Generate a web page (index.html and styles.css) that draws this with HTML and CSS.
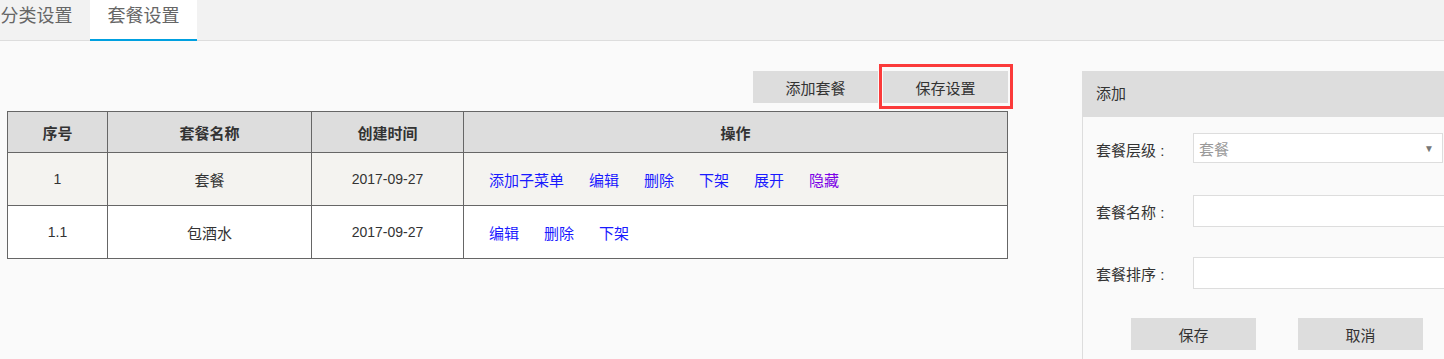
FILE: index.html
```html
<!DOCTYPE html>
<html lang="zh-CN">
<head>
<meta charset="utf-8">
<title>套餐设置</title>
<link rel="stylesheet" href="styles.css">
</head>
<body>
<div class="tabs">
  <div class="tab">分类设置</div>
  <div class="tab active">套餐设置</div>
</div>
<div class="main">
  <section class="left">
    <div class="toolbar">
      <button class="btn">添加套餐</button>
      <button class="btn highlighted">保存设置</button>
    </div>
    <table class="grid">
      <colgroup>
        <col class="c1"><col class="c2"><col class="c3"><col class="c4">
      </colgroup>
      <thead>
        <tr><th>序号</th><th>套餐名称</th><th>创建时间</th><th>操作</th></tr>
      </thead>
      <tbody>
        <tr class="odd">
          <td class="num">1</td>
          <td>套餐</td>
          <td class="num">2017-09-27</td>
          <td class="ops"><a href="#">添加子菜单</a><a href="#">编辑</a><a href="#">删除</a><a href="#">下架</a><a href="#">展开</a><a href="#" class="visited">隐藏</a></td>
        </tr>
        <tr class="even">
          <td class="num">1.1</td>
          <td>包酒水</td>
          <td class="num">2017-09-27</td>
          <td class="ops"><a href="#">编辑</a><a href="#">删除</a><a href="#">下架</a></td>
        </tr>
      </tbody>
    </table>
  </section>
  <aside class="panel">
    <div class="panel-head">添加</div>
    <div class="form">
      <div class="row">
        <label class="lbl">套餐层级 :</label>
        <div class="select"><span>套餐</span><span class="arrow">▼</span></div>
      </div>
      <div class="row">
        <label class="lbl">套餐名称 :</label>
        <div class="input"></div>
      </div>
      <div class="row">
        <label class="lbl">套餐排序 :</label>
        <div class="input"></div>
      </div>
      <div class="actions">
        <button class="btn">保存</button>
        <button class="btn">取消</button>
      </div>
    </div>
  </aside>
</div>
</body>
</html>
```

FILE: styles.css
```css
html, body {
  margin: 0;
  padding: 0;
  overflow: hidden;
}
body {
  background: #fafafa;
  font-family: "Liberation Sans", "Noto Sans CJK SC", sans-serif;
  color: #333;
  font-size: 15px;
  width: 1444px;
  height: 359px;
}
.tabs {
  display: flex;
  align-items: flex-start;
  height: 41px;
  box-sizing: border-box;
  background: #f2f2f2;
  border-bottom: 1px solid #dddddd;
}
.tab {
  width: 107px;
  height: 41px;
  box-sizing: border-box;
  text-align: center;
  font-size: 18px;
  line-height: 32px;
  color: #666;
  flex: none;
}
.tab:first-child {
  margin-left: -17px;
}
.tab.active {
  background: #fff;
  border-bottom: 2px solid #00a0e0;
}
.main {
  display: flex;
  align-items: flex-start;
  padding-top: 30px;
}
.left {
  width: 1001px;
  margin-left: 7px;
  flex: none;
}
.toolbar {
  display: flex;
  justify-content: flex-end;
  gap: 5px;
  height: 32px;
  margin-bottom: 8px;
}
.btn {
  width: 125px;
  height: 32px;
  border: none;
  background: #dddddd;
  color: #333;
  font-family: "Liberation Sans", "Noto Sans CJK SC", sans-serif;
  font-size: 15px;
  padding: 0;
  margin: 0;
}
.highlighted {
  position: relative;
}
.highlighted::after {
  content: "";
  position: absolute;
  left: -4px;
  right: -5px;
  top: -7px;
  bottom: -6px;
  border: 3px solid #fb3a3a;
  pointer-events: none;
}
.grid {
  border-collapse: collapse;
  table-layout: fixed;
  width: 1000px;
  border: 1px solid #666;
}
.c1 { width: 100px; }
.c2 { width: 204px; }
.c3 { width: 152px; }
.c4 { width: 544px; }
.grid th, .grid td {
  border: 1px solid #666;
  text-align: center;
  padding: 0;
  font-size: 15px;
  color: #333;
}
.grid th {
  background: #dddddd;
  height: 40px;
  font-weight: bold;
}
.grid td {
  height: 52px;
}
.grid td.num {
  font-size: 14px;
}
.odd td { background: #f4f3f0; }
.even td { background: #fff; }
.grid td.ops {
  text-align: left;
  padding-left: 25px;
}
.ops a {
  color: #1a1aff;
  text-decoration: none;
  margin-right: 25px;
}
.ops a.visited {
  color: #7a00e6;
}
.panel {
  margin-left: 74px;
  width: 400px;
  flex: none;
  border-left: 1px solid #dddddd;
  height: 300px;
}
.panel-head {
  background: #dddddd;
  height: 46px;
  line-height: 46px;
  padding-left: 13px;
  font-size: 15px;
  color: #333;
}
.form {
  display: flex;
  flex-direction: column;
  gap: 30px;
  padding-top: 16px;
}
.row {
  display: flex;
  align-items: center;
  height: 32px;
}
.lbl {
  width: 97px;
  padding-left: 13px;
  flex: none;
  font-size: 15px;
  color: #333;
}
.select {
  align-self: flex-start;
  width: 250px;
  height: 30px;
  box-sizing: border-box;
  border: 1px solid #dddddd;
  background: #fff;
  display: flex;
  align-items: center;
  justify-content: space-between;
  padding: 0 8px 0 5px;
  color: #999;
  font-size: 15px;
}
.arrow {
  font-size: 10px;
  color: #777;
}
.input {
  width: 270px;
  height: 32px;
  box-sizing: border-box;
  border: 1px solid #dddddd;
  background: #fff;
}
.actions {
  display: flex;
  gap: 42px;
  padding-left: 48px;
  margin-top: -1px;
}
```
